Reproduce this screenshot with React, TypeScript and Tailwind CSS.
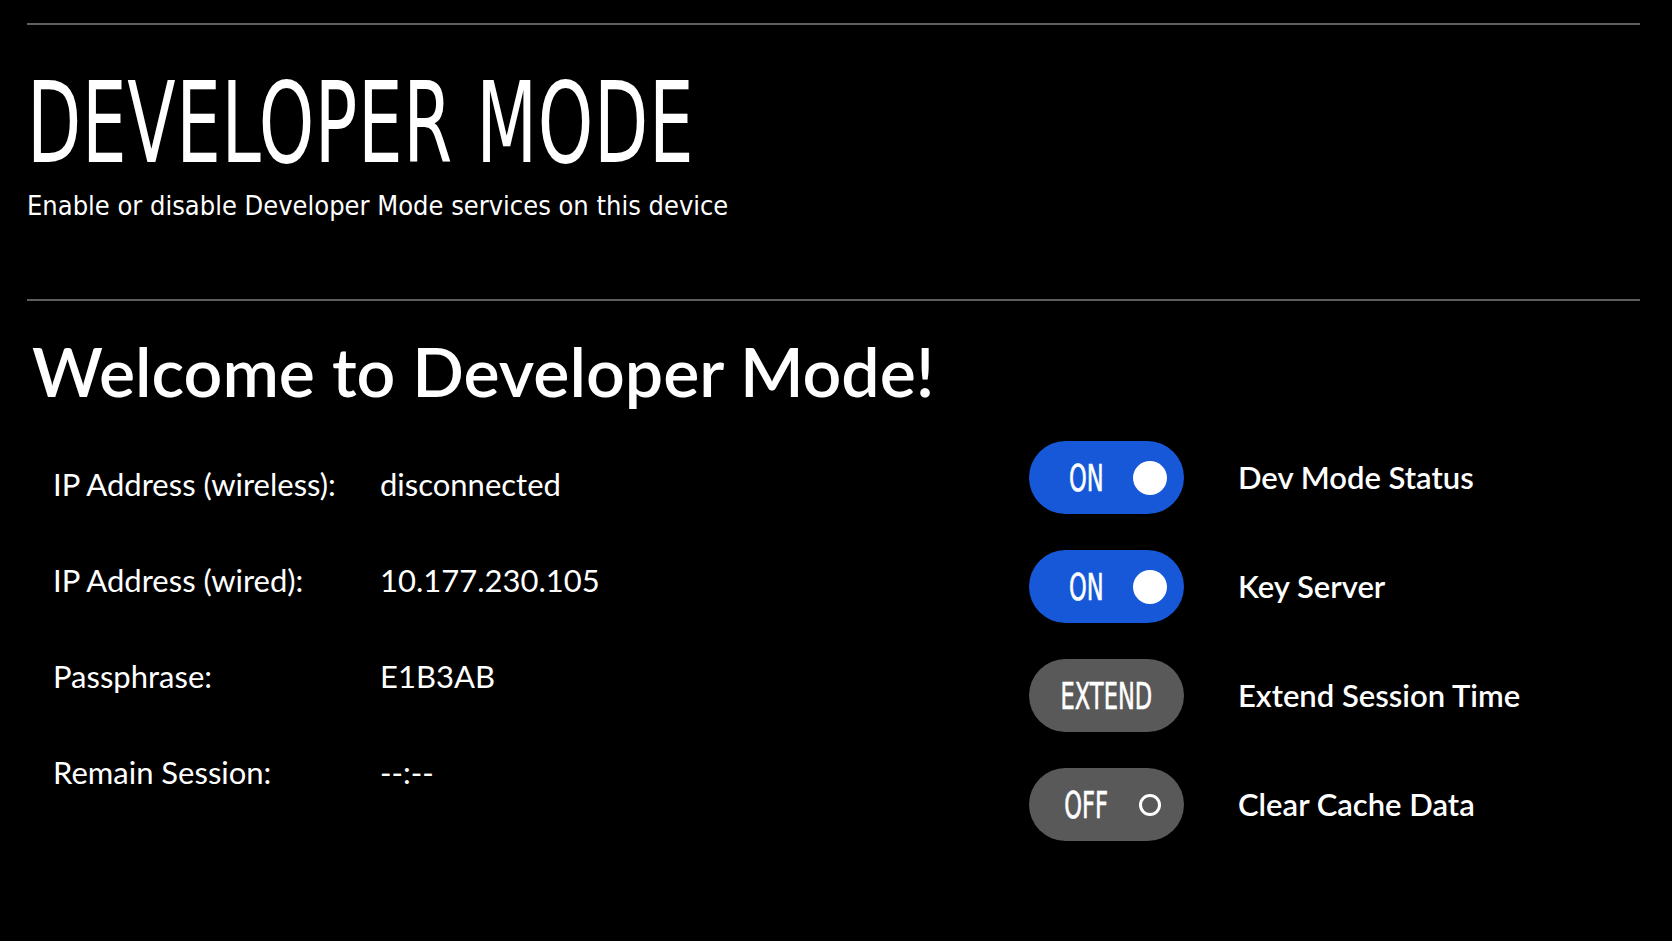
import type { ReactNode } from 'react';

type InfoRow = { label: string; value: string };

type ControlRow = {
  kind: 'on' | 'off' | 'extend';
  label: string;
};

const infoRows: InfoRow[] = [
  { label: 'IP Address (wireless):', value: 'disconnected' },
  { label: 'IP Address (wired):', value: '10.177.230.105' },
  { label: 'Passphrase:', value: 'E1B3AB' },
  { label: 'Remain Session:', value: '--:--' },
];

const controls: ControlRow[] = [
  { kind: 'on', label: 'Dev Mode Status' },
  { kind: 'on', label: 'Key Server' },
  { kind: 'extend', label: 'Extend Session Time' },
  { kind: 'off', label: 'Clear Cache Data' },
];

const condensed = "font-['Liberation_Sans_Narrow','DejaVu_Sans_Condensed','Liberation_Sans',sans-serif]";

function Pill({ active, children }: { active: boolean; children: ReactNode }) {
  return (
    <div
      className={`flex h-[73px] w-[155px] items-center rounded-full ${
        active ? 'bg-[#1658d8]' : 'bg-[#595959]'
      }`}
    >
      {children}
    </div>
  );
}

// tall narrow caps used inside the pills
function PillText({ children }: { children: ReactNode }) {
  return (
    <span
      className={`${condensed} inline-block scale-x-[0.66] text-[38px] leading-none text-white [-webkit-text-stroke:0.6px_white]`}
    >
      {children}
    </span>
  );
}

function ControlButton({ kind }: { kind: ControlRow['kind'] }) {
  if (kind === 'extend') {
    return (
      <Pill active={false}>
        <div className="flex w-full justify-center">
          <PillText>EXTEND</PillText>
        </div>
      </Pill>
    );
  }
  const on = kind === 'on';
  return (
    <Pill active={on}>
      <div className="ml-[32px] flex w-[50px] justify-center">
        <PillText>{on ? 'ON' : 'OFF'}</PillText>
      </div>
      {on ? (
        <span className="ml-[22px] h-[34px] w-[34px] rounded-full bg-white" />
      ) : (
        <span className="ml-[28px] h-[22px] w-[22px] rounded-full border-[3px] border-white" />
      )}
    </Pill>
  );
}

export default function App() {
  return (
    <div className="h-[941px] w-full overflow-hidden bg-black pl-[27px] pr-[32px] pt-[23px] font-['Lato','Liberation_Sans',sans-serif] text-white">
      <div className="h-[2px] bg-[#5e5e5e]" />

      <header className="pt-[48px]">
        <h1
          className={`${condensed} origin-left scale-x-[0.70] text-[112px] leading-[100px] font-normal tracking-[1px] whitespace-nowrap text-white`}
        >
          DEVELOPER MODE
        </h1>
        <p className={`${condensed} mt-[16px] text-[27px] leading-[34px] text-white`}>
          Enable or disable Developer Mode services on this device
        </p>
      </header>

      <div className="mt-[76px] h-[2px] bg-[#5e5e5e]" />

      <h2 className="mt-[30px] pl-[5px] text-[68px] leading-[80px] font-semibold">Welcome to Developer Mode!</h2>

      <section className="mt-[22px] grid grid-cols-[1002px_1fr]">
        <div className="flex flex-col gap-[40px] pl-[26px] pt-[23px]">
          {infoRows.map((row) => (
            <div key={row.label} className="flex items-center text-[31px] leading-[56px]">
              <span className="w-[327px]">{row.label}</span>
              <span>{row.value}</span>
            </div>
          ))}
        </div>

        <div className="mt-[8px] flex flex-col gap-[36px]">
          {controls.map((c) => (
            <div key={c.label} className="flex items-center">
              <ControlButton kind={c.kind} />
              <span className="ml-[54px] text-[31px] font-semibold">{c.label}</span>
            </div>
          ))}
        </div>
      </section>
    </div>
  );
}
